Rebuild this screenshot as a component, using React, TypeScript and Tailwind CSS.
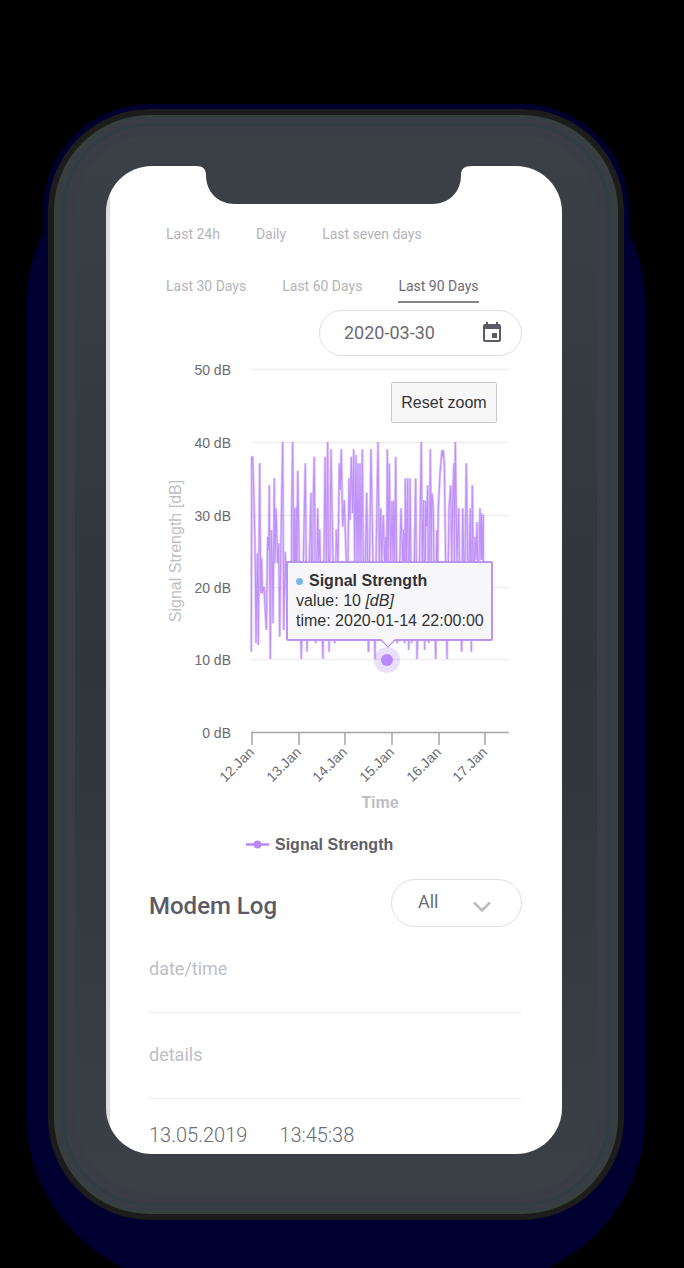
import React from "react";

const LEFT_POINTS: [number, number][] = [
  [34, 665], [35, 80], [38, 80], [43, 250], [46, 400], [48, 640], [52, 370], [55, 645], [59, 100], [62, 490], [65, 385],
  [67, 490], [72, 470], [79, 600], [83, 320], [86, 360], [88, 166], [91, 687], [94, 300], [97, 400], [99, 580],
  [103, 145], [105, 400], [108, 235], [113, 400], [116, 340], [119, 620], [122, 380], [128, 36], [131, 600],
  [136, 365], [139, 480], [154, 600], [155, 235], [158, 36], [162, 560], [164, 235], [168, 560], [169, 230],
  [171, 400], [173, 122], [178, 400], [184, 687], [190, 400], [196, 100], [201, 665], [208, 400], [213, 188],
  [216, 620], [220, 200], [223, 80], [227, 640], [233, 235], [236, 400], [239, 298], [243, 500], [249, 687],
  [255, 80], [259, 400], [263, 36], [267, 665], [273, 58], [279, 400], [284, 640], [289, 298], [294, 400],
  [298, 100], [301, 180], [304, 58], [308, 290], [313, 210], [319, 395], [324, 395], [327, 145], [330, 270],
  [334, 80], [338, 250], [341, 58], [344, 400], [348, 75], [351, 400], [354, 100], [357, 400], [360, 100],
  [363, 400], [367, 58], [372, 620], [380, 188], [386, 665],
];

const RIGHT_POINTS: [number, number][] = [
  [6, 235], [10, 665], [18, 58], [24, 400], [30, 687], [34, 340], [39, 36], [43, 400], [47, 235], [50, 400],
  [55, 255], [59, 400], [62, 320], [64, 640], [67, 58], [70, 400], [73, 100], [77, 400], [81, 212], [84, 400],
  [86, 212], [89, 400], [92, 80], [97, 640], [102, 500], [108, 235], [113, 400], [116, 298], [119, 640], [121, 145],
  [124, 400], [128, 145], [131, 660], [135, 145], [140, 640], [146, 500], [152, 145], [156, 687], [162, 500],
  [169, 36], [172, 400], [176, 210], [179, 660], [182, 212], [185, 290], [188, 166], [191, 640], [196, 58],
  [199, 400], [201, 190], [205, 230], [208, 500], [212, 687], [215, 300], [218, 400], [220, 235], [225, 130],
  [231, 60], [233, 80], [235, 60], [238, 95], [242, 400], [246, 687], [252, 235], [257, 166], [260, 400],
  [263, 212], [267, 100], [268, 400], [271, 36], [276, 400], [281, 235], [285, 500], [290, 665], [293, 235],
  [299, 500], [304, 100], [310, 500], [316, 235], [319, 665], [322, 166], [326, 500], [330, 320], [333, 390],
  [336, 276], [340, 500], [345, 235], [348, 390], [350, 250], [352, 390], [355, 255], [355, 395],
];

/* Sample coordinates are stored at three times the size of the plot. */
const seriesPoints = [
  ...LEFT_POINTS.map(([x, y]) => [91 + x / 3, 70 + y / 3]),
  ...RIGHT_POINTS.map(([x, y]) => [216 + x / 3, 70 + y / 3]),
]
  .map(([x, y]) => `${x.toFixed(1)},${y.toFixed(1)}`)
  .join(" ");

const Y_AXIS = [
  { label: "50 dB", y: 9 },
  { label: "40 dB", y: 82 },
  { label: "30 dB", y: 155 },
  { label: "20 dB", y: 227 },
  { label: "10 dB", y: 299 },
  { label: "0 dB", y: 372 },
];

const X_AXIS = [
  { label: "12.Jan", x: 103 },
  { label: "13.Jan", x: 150 },
  { label: "14.Jan", x: 196 },
  { label: "15.Jan", x: 243 },
  { label: "16.Jan", x: 290 },
  { label: "17.Jan", x: 336 },
];

function Tab({ label, active = false }: { label: string; active?: boolean }) {
  return (
    <button
      type="button"
      aria-pressed={active}
      className={
        active
          ? "h-8 border-b-2 border-[#85858d] text-sm text-[#6b6b76]"
          : "h-8 border-b-2 border-transparent text-sm text-[#b4b4b8]"
      }
    >
      {label}
    </button>
  );
}

function CalendarIcon() {
  return (
    <svg width="24" height="24" viewBox="0 0 24 24" fill="#5b5a66" aria-hidden="true">
      <path d="M17 12h-5v5h5v-5zM16 1v2H8V1H6v2H5c-1.11 0-1.99.9-1.99 2L3 19c0 1.1.89 2 2 2h14c1.1 0 2-.9 2-2V5c0-1.1-.9-2-2-2h-1V1h-2zm3 18H5V8h14v11z" />
    </svg>
  );
}

function Tooltip() {
  return (
    <div className="absolute top-[201px] left-[137px] w-[207px] rounded-xs border-2 border-[#bd93f2] bg-[#f7f7f9] py-2 pl-2 text-base leading-5 whitespace-nowrap text-[#333338]">
      <p className="flex items-center gap-1.5 font-bold">
        <span className="size-[7px] rounded-full bg-[#7cb5ec]" />
        Signal Strength
      </p>
      <p>
        value: 10 <em>[dB]</em>
      </p>
      <p>time: 2020-01-14 22:00:00</p>
      <svg className="absolute top-full left-[90px]" width="20" height="10" viewBox="0 0 20 10" aria-hidden="true">
        <path d="M3 0 10 8 17 0Z" fill="#f7f7f9" />
        <path d="M3 1 10 8 17 1" fill="none" stroke="#b394dc" strokeWidth="1.2" />
      </svg>
    </div>
  );
}

function SignalChart() {
  return (
    <section aria-label="Signal strength over time" className="relative w-[373px]">
      <svg
        width="373"
        height="504"
        viewBox="0 0 373 504"
        role="img"
        aria-label="Signal strength chart"
        className="block font-['Liberation_Sans',sans-serif]"
      >
        {Y_AXIS.map(({ label, y }) => (
          <g key={label}>
            <path d={`M102 ${y}.5H360`} stroke={label === "0 dB" ? "#a5a5a9" : "#eeeeef"} strokeWidth="1.5" />
            <text x="82" y={y + 6} textAnchor="end" fontSize="14" fill="#6b6b70">
              {label}
            </text>
          </g>
        ))}
        {X_AXIS.map(({ label, x }) => (
          <g key={label}>
            <path d={`M${x} 373v12`} stroke="#a5a5a9" strokeWidth="1.5" />
            <text
              x={x + 3}
              y="393"
              textAnchor="end"
              fontSize="14"
              fill="#6b6b70"
              transform={`rotate(-45 ${x + 3} 393)`}
            >
              {label}
            </text>
          </g>
        ))}
        <text x="32" y="191" textAnchor="middle" fontSize="16" fill="#bebec4" transform="rotate(-90 32 191)">
          Signal Strength [dB]
        </text>
        <text x="231" y="448" textAnchor="middle" fontSize="16" fontWeight="700" fill="#bebec4">
          Time
        </text>
        <g fill="none" stroke="#ba88f8" strokeLinejoin="bevel">
          <polyline points={seriesPoints} strokeWidth="2.600" strokeOpacity="0.45" />
          <polyline points={seriesPoints} strokeWidth="1.1" strokeOpacity="0.85" />
        </g>
        <circle cx="238" cy="300" r="13" fill="#ba88f8" fillOpacity="0.28" />
        <circle cx="238" cy="300" r="6" fill="#ba88f8" />
        <path d="M97 484.500h23" stroke="#ba88f8" strokeWidth="2.500" />
        <circle cx="108.500" cy="484.500" r="4" fill="#ba88f8" />
        <text x="126" y="490" fontSize="16" fontWeight="700" fill="#5e5e66">
          Signal Strength
        </text>
      </svg>
      <button
        type="button"
        className="absolute top-[22px] left-[242px] h-[41px] w-[106px] rounded-xs border border-[#c8c8ca] bg-[#f7f7f8] text-base text-[#333338]"
      >
        Reset zoom
      </button>
      <Tooltip />
    </section>
  );
}

function ModemLog() {
  return (
    <section className="font-['Roboto',sans-serif] text-lg">
      <div className="flex h-12 items-center justify-between">
        <h2 className="pt-1.5 text-2xl font-medium text-[#5b5a66]">Modem Log</h2>
        <div className="relative h-12 w-[131px]">
          <select
            aria-label="Log filter"
            className="size-full appearance-none rounded-full border border-[#dfdfe2] bg-white pb-0.5 pl-[26px] text-lg text-[#6b6b76]"
          >
            <option>All</option>
          </select>
          <svg
            className="pointer-events-none absolute top-[21px] right-[30px]"
            width="20"
            height="14"
            viewBox="0 0 20 14"
            fill="none"
            aria-hidden="true"
          >
            <path d="M2 2.500 10 10.500 18 2.500" stroke="#bcbcc1" strokeWidth="2.500" />
          </svg>
        </div>
      </div>
      <dl className="text-[#bebec6]">
        <dt className="flex h-[86px] items-center border-b border-[#f0f0f2] pb-0.5">date/time</dt>
        <dt className="flex h-[86px] items-center border-b border-[#f0f0f2] pb-0.5">details</dt>
        <dd className="flex gap-8 pt-6 text-xl leading-6 font-light text-[#6b6b76]">
          <span>13.05.2019</span>
          <span>13:45:38</span>
        </dd>
      </dl>
    </section>
  );
}

export default function App() {
  return (
    <main className="min-h-screen overflow-hidden bg-black pt-[109px] pr-[60px] pb-12 pl-12 font-['Roboto',sans-serif]">
      <div className="relative isolate mx-auto max-w-[576px]">
        <div className="absolute -inset-x-[22px] top-7 -bottom-16 -z-10 rounded-[170px] bg-[#000030]" />
        <div className="rounded-[102px] border-[6px] border-[#1c1c1c] bg-linear-to-b from-[#3c4047] via-[#2f353b] to-[#3c4047] pt-[51px] pr-14 pb-[60px] pl-[52px] shadow-[0_0_0_5px_#000030,inset_0_0_0_3px_#36413e,inset_0_0_0_8px_#383d45,inset_0_0_0_11px_#303d43,inset_0_0_0_21px_#3a3d46]">
          <div className="relative h-[988px] overflow-hidden rounded-[46px] bg-white bg-[linear-gradient(to_right,#dedee2_4px,#ffffff_4px)]">
            <svg
              className="absolute top-0 left-[90px]"
              width="276"
              height="38"
              viewBox="0 0 276 38"
              fill="#3b3f46"
              aria-hidden="true"
            >
              <path d="M0 0C7 0 10 3 10 9C10 26 22 38 39 38H236C253 38 265 26 265 9C265 3 268 0 276 0Z" />
            </svg>
            <div className="pt-[53px] pr-10 pl-[43px]">
              <nav aria-label="Time range" className="flex flex-col gap-5 pl-[17px] whitespace-nowrap">
                <div className="flex gap-9">
                  <Tab label="Last 24h" />
                  <Tab label="Daily" />
                  <Tab label="Last seven days" />
                </div>
                <div className="flex gap-9">
                  <Tab label="Last 30 Days" />
                  <Tab label="Last 60 Days" />
                  <Tab label="Last 90 Days" active />
                </div>
              </nav>
              <div className="mt-[7px] ml-auto flex h-[46px] w-[203px] items-center justify-between rounded-full border border-[#dfdfe2] pr-[17px] pl-6">
                <input
                  aria-label="Date"
                  defaultValue="2020-03-30"
                  className="w-28 bg-transparent text-lg text-[#6b6b76] outline-none"
                />
                <button type="button" aria-label="Open calendar">
                  <CalendarIcon />
                </button>
              </div>
              <div className="mt-1 font-['Liberation_Sans',sans-serif]">
                <SignalChart />
              </div>
              <div className="mt-[15px]">
                <ModemLog />
              </div>
            </div>
          </div>
        </div>
      </div>
    </main>
  );
}
